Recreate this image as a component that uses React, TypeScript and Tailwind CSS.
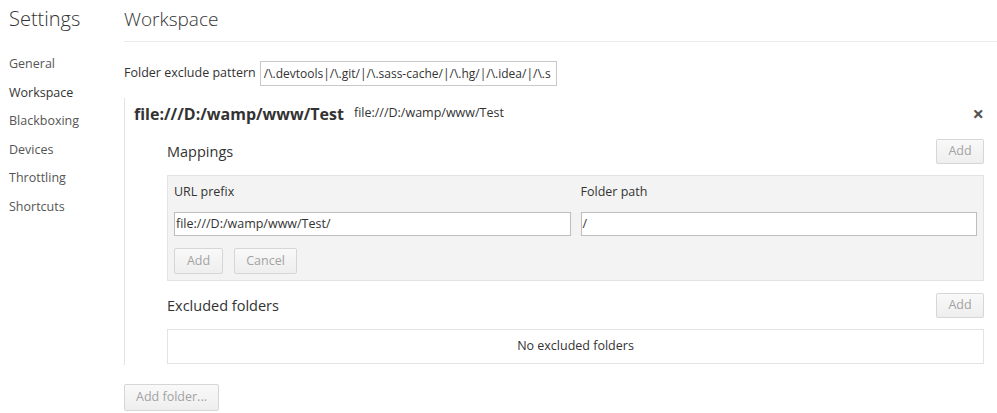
import React from "react";

const btn =
  "h-[25px] px-[10px] border border-[#d6d6d6] rounded-[2px] bg-gradient-to-b from-[#f9f9f9] to-[#eeeeee] text-[#a3a3a3] text-[12.5px] leading-none";

export default function App() {
  return (
    <div
      className="w-[997px] h-[413px] bg-white flex text-[#333] overflow-hidden"
      style={{ fontFamily: '"Open Sans", "Noto Sans", sans-serif' }}
    >
      <div className="w-[124px] shrink-0 pl-[9px]">
        <div className="text-[20px] font-light text-[#333] pt-[6px] leading-[26px]">Settings</div>
        <div className="mt-[18px] flex flex-col text-[12.5px] text-[#555]">
          {["General", "Workspace", "Blackboxing", "Devices", "Throttling", "Shortcuts"].map((t, i) => (
            <div key={t} className={`h-[28.6px] leading-[28.6px] ${i === 1 ? "text-[#333]" : ""}`}>
              {t}
            </div>
          ))}
        </div>
      </div>
      <div className="flex-1 flex flex-col">
        <div className="text-[19px] font-light leading-[26px] pt-[6px] pb-[9px] border-b border-[#eaeaea]">Workspace</div>
        <div className="flex items-center mt-[19px] text-[12.5px]">
          <span className="text-[#333]">Folder exclude pattern</span>
          <div className="ml-[4px] w-[297px] h-[25px] border border-[#c8c8c8] px-[3px] flex items-center overflow-hidden whitespace-nowrap text-[#333] text-[12px]">
            /\.devtools|/\.git/|/\.sass-cache/|/\.hg/|/\.idea/|/\.s
          </div>
        </div>
        <div className="mt-[12px] border-l border-[#e3e3e3] pl-[9px] pr-[13px] pb-[1px] flex flex-col">
          <div className="flex items-center h-[31px] mt-[0px]">
            <span className="text-[16px] font-bold text-[#333]">file:///D:/wamp/www/Test</span>
            <span className="ml-[10px] text-[12.5px] text-[#333]">file:///D:/wamp/www/Test</span>
            <span className="ml-auto text-[20px] font-bold text-[#555] leading-none">×</span>
          </div>
          <div className="pl-[33px] pr-0 flex flex-col">
            <div className="flex items-center justify-between mt-[10px]">
              <span className="text-[14.5px] text-[#333]">Mappings</span>
              <button className={`${btn} w-[48px] px-0`}>Add</button>
            </div>
            <div className="mt-[11px] bg-[#f3f3f3] border border-[#e3e3e3] pt-[7px] pb-[6px] px-[6px]">
              <div className="grid grid-cols-2 gap-[10px] text-[12.5px] leading-[17px]">
                <div>URL prefix</div>
                <div>Folder path</div>
              </div>
              <div className="grid grid-cols-2 gap-[10px] mt-[12px]">
                <div className="h-[24px] bg-white border border-[#bdbdbd] px-[1px] flex items-center text-[12.5px]">file:///D:/wamp/www/Test/</div>
                <div className="h-[24px] bg-white border border-[#bdbdbd] px-[1px] flex items-center text-[12.5px]">/</div>
              </div>
              <div className="flex gap-[11px] mt-[12px]">
                <button className={`${btn} w-[49px] px-0 h-[26px]`}>Add</button>
                <button className={`${btn} w-[63px] px-0 h-[26px]`}>Cancel</button>
              </div>
            </div>
            <div className="flex items-center justify-between mt-[12px]">
              <span className="text-[14.5px] text-[#333]">Excluded folders</span>
              <button className={`${btn} w-[48px] px-0`}>Add</button>
            </div>
            <div className="mt-[11px] h-[35px] border border-[#e3e3e3] flex items-center justify-center text-[12.5px] text-[#333]">
              No excluded folders
            </div>
          </div>
        </div>
        <div className="mt-[18px]">
          <button className={`${btn} w-[95px] px-0 h-[27px]`}>Add folder...</button>
        </div>
      </div>
    </div>
  );
}
